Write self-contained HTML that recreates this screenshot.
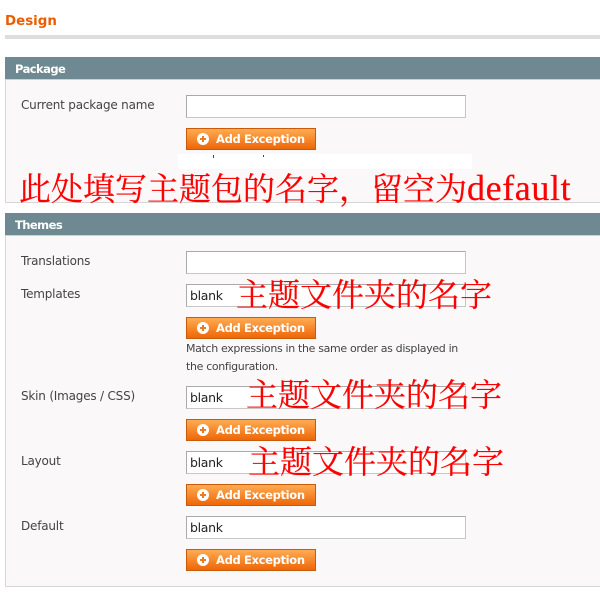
<!DOCTYPE html>
<html><head><meta charset="utf-8"><style>
html,body{margin:0;padding:0;background:#fff;}
#p{position:relative;width:600px;height:596px;overflow:hidden;background:#fff;font-family:"DejaVu Sans","Liberation Sans",sans-serif;font-size:12px;color:#444;}
#p div{position:absolute;white-space:nowrap;box-sizing:border-box;}
.bar{left:5px;width:595px;height:22px;background:#6f8992;color:#fff;font-weight:bold;font-size:11.5px;line-height:25px;padding-left:10px;letter-spacing:-.55px;}
.box{left:5px;width:600px;background:#faf8f9;border:1px solid #d6d6d6;border-top:1px solid #d0d0d0;}
.lab{left:21px;font-size:12px;line-height:18px;color:#444;letter-spacing:-.2px;}
.inp{left:186px;width:280px;height:23px;background:#fff;border:1px solid #c6c6c6;border-top-color:#aaa;border-left-color:#aaa;font-size:12.5px;line-height:22px;padding-left:3px;color:#222;letter-spacing:-.3px;}
.btn{left:186px;width:130px;height:22px;background:linear-gradient(#ffab52,#ee6708);border:1px solid #c95b08;color:#fff;font-weight:bold;font-size:11.5px;line-height:20px;padding-left:29px;letter-spacing:-.33px;}
.ic{left:10px;top:4px;width:12px;height:12px;}
.note{left:186px;font-size:11px;line-height:20px;color:#444;letter-spacing:-.34px;}
.red{color:#f00;font-family:"Noto Serif CJK SC","Liberation Serif",serif;font-size:32px;line-height:36px;-webkit-text-stroke:.2px #f00;}
.red span{font-family:"Liberation Serif",serif;font-size:36px;letter-spacing:.6px;}
</style></head><body><div id="p">
<div style="left:5px;top:12px;font-size:13.4px;font-weight:bold;color:#eb5e00;line-height:20px;">Design</div>
<div style="left:5px;top:35px;width:595px;height:4px;background:#ddd;"></div>

<div class="bar" style="top:57px;">Package</div>
<div class="box" style="top:79px;height:124px;"></div>
<div class="lab" style="top:96px;">Current package name</div>
<div class="inp" style="top:95px;"></div>
<div class="btn" style="top:128px;"><svg class="ic" style="position:absolute" viewBox="0 0 12 12"><circle cx="6" cy="6" r="6" fill="#fff"/><path d="M6 3v6M3 6h6" stroke="#ee7a1c" stroke-width="2"/></svg>Add Exception</div>
<div style="left:178px;top:154px;width:294px;height:15px;background:#fff;"></div>
<div style="left:213px;top:155px;width:1px;height:3px;background:#5a3a70;"></div>
<div style="left:263px;top:155px;width:1px;height:2px;background:#5a3a70;"></div>
<div class="red" style="left:19px;top:169px;">此处填写主题包的名字，留空为<span>default</span></div>

<div class="bar" style="top:213px;">Themes</div>
<div class="box" style="top:235px;height:352px;"></div>
<div class="lab" style="top:252px;">Translations</div>
<div class="inp" style="top:251px;"></div>
<div class="lab" style="top:285px;">Templates</div>
<div class="inp" style="top:284px;">blank</div>
<div class="btn" style="top:317px;"><svg class="ic" style="position:absolute" viewBox="0 0 12 12"><circle cx="6" cy="6" r="6" fill="#fff"/><path d="M6 3v6M3 6h6" stroke="#ee7a1c" stroke-width="2"/></svg>Add Exception</div>
<div class="note" style="top:339px;">Match expressions in the same order as displayed in</div>
<div class="note" style="top:357px;">the configuration.</div>
<div class="lab" style="top:387px;">Skin (Images / CSS)</div>
<div class="inp" style="top:386px;">blank</div>
<div class="btn" style="top:419px;"><svg class="ic" style="position:absolute" viewBox="0 0 12 12"><circle cx="6" cy="6" r="6" fill="#fff"/><path d="M6 3v6M3 6h6" stroke="#ee7a1c" stroke-width="2"/></svg>Add Exception</div>
<div class="lab" style="top:452px;">Layout</div>
<div class="inp" style="top:451px;">blank</div>
<div class="btn" style="top:484px;"><svg class="ic" style="position:absolute" viewBox="0 0 12 12"><circle cx="6" cy="6" r="6" fill="#fff"/><path d="M6 3v6M3 6h6" stroke="#ee7a1c" stroke-width="2"/></svg>Add Exception</div>
<div class="lab" style="top:517px;">Default</div>
<div class="inp" style="top:516px;">blank</div>
<div class="btn" style="top:549px;"><svg class="ic" style="position:absolute" viewBox="0 0 12 12"><circle cx="6" cy="6" r="6" fill="#fff"/><path d="M6 3v6M3 6h6" stroke="#ee7a1c" stroke-width="2"/></svg>Add Exception</div>
<div class="red" style="left:236px;top:275px;">主题文件夹的名字</div>
<div class="red" style="left:246px;top:375px;">主题文件夹的名字</div>
<div class="red" style="left:248px;top:442px;">主题文件夹的名字</div>
</div></body></html>
